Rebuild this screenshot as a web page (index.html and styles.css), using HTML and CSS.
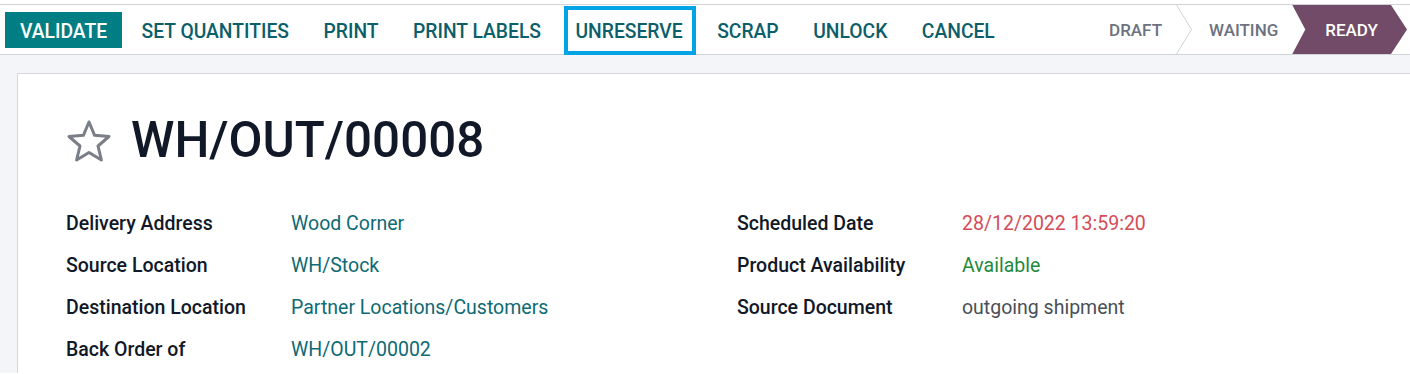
FILE: index.html
```html
<!DOCTYPE html>
<html>
<head>
<meta charset="utf-8">
<link rel="stylesheet" href="styles.css">
</head>
<body>
<div class="top-strip"></div>
<div class="toolbar">
  <div class="actions">
    <button class="btn btn-primary">VALIDATE</button>
    <button class="btn">SET QUANTITIES</button>
    <button class="btn">PRINT</button>
    <button class="btn">PRINT LABELS</button>
    <button class="btn highlighted">UNRESERVE</button>
    <button class="btn">SCRAP</button>
    <button class="btn">UNLOCK</button>
    <button class="btn">CANCEL</button>
  </div>
  <div class="statusbar">
    <div class="stage stage-first">DRAFT</div>
    <svg class="sep" width="16" height="49" viewBox="0 0 16 49"><polyline points="0.5,0 15.5,24.5 0.5,49" fill="none" stroke="#cfd2d6" stroke-width="1"/></svg>
    <div class="stage stage-mid">WAITING</div>
    <div class="stage stage-current">READY</div>
  </div>
</div>
<div class="sheet-bg">
  <div class="sheet">
    <div class="title-row">
      <svg class="star" width="46" height="44" viewBox="0 0 46 44"><polygon points="23,3 28.6,16.3 43,17.5 32,27 35.4,41 23,33.5 10.6,41 14,27 3,17.5 17.4,16.3" fill="none" stroke="#7a7e86" stroke-width="3" stroke-linejoin="round"/></svg>
      <h1 class="title">WH/OUT/00008</h1>
    </div>
    <div class="groups">
      <div class="group">
        <div class="field"><span class="label">Delivery Address</span><span class="value link">Wood Corner</span></div>
        <div class="field"><span class="label">Source Location</span><span class="value link">WH/Stock</span></div>
        <div class="field"><span class="label">Destination Location</span><span class="value link">Partner Locations/Customers</span></div>
        <div class="field"><span class="label">Back Order of</span><span class="value link">WH/OUT/00002</span></div>
      </div>
      <div class="group">
        <div class="field"><span class="label">Scheduled Date</span><span class="value danger">28/12/2022 13:59:20</span></div>
        <div class="field"><span class="label">Product Availability</span><span class="value success">Available</span></div>
        <div class="field"><span class="label">Source Document</span><span class="value muted">outgoing shipment</span></div>
      </div>
    </div>
  </div>
</div>
</body>
</html>
```
FILE: styles.css
```css
* { box-sizing: border-box; }
html, body { margin: 0; padding: 0; }
body {
  font-family: Roboto, "Liberation Sans", sans-serif;
  background: #ffffff;
  width: 1410px;
  height: 374px;
  overflow: hidden;
}
.top-strip {
  height: 5px;
  background: #ffffff;
  border-bottom: 1px solid #cfd2d6;
}
.toolbar {
  height: 50px;
  display: flex;
  justify-content: space-between;
  align-items: stretch;
  border-bottom: 1px solid #cfd2d6;
  background: #ffffff;
}
.actions {
  display: flex;
  align-items: center;
  gap: 4.5px;
  padding-left: 5px;
}
.btn {
  font-family: Roboto, "Liberation Sans", sans-serif;
  font-size: 19.3px;
  font-weight: 500;
  height: 36px;
  padding: 3px 15px 0;
  border: none;
  background: transparent;
  color: #0c5f6a;
  position: relative;
  cursor: pointer;
}
.btn-primary {
  background: #017e84;
  color: #ffffff;
}
.highlighted::after {
  content: "";
  position: absolute;
  left: 4px;
  right: 2px;
  top: -6px;
  bottom: -7px;
  border: 4px solid #00a3e3;
}
.statusbar {
  display: flex;
  align-items: stretch;
  padding-right: 3px;
}
.stage {
  display: flex;
  align-items: center;
  font-size: 17px;
  font-weight: 500;
  color: #6c7280;
}
.stage-first { padding-right: 14px; }
.stage-mid { padding: 0 14px 0 17px; }
.stage-current {
  background: #714b67;
  color: #ffffff;
  padding: 0 29px 0 33px;
  clip-path: polygon(0 0, calc(100% - 16px) 0, 100% 50%, calc(100% - 16px) 100%, 0 100%, 13px 50%);
}
.sep { display: block; }
.sheet-bg {
  background: #f4f5f8;
  padding: 18px 0 0 17px;
  height: 318px;
  overflow: hidden;
}
.sheet {
  background: #ffffff;
  border: 1px solid #d6d8dc;
  border-right: none;
  border-bottom: none;
  height: 300px;
  padding: 42px 0 0 48px;
}
.title-row {
  display: flex;
  align-items: center;
  gap: 19px;
  height: 50px;
}
.star { display: block; margin-top: 0; }
.title {
  margin: 0;
  font-size: 49.3px;
  font-weight: 500;
  color: #111827;
  line-height: 1;
}
.groups {
  display: grid;
  grid-template-columns: 671px 1fr;
  margin-top: 46px;
}
.field {
  display: grid;
  grid-template-columns: 225px 1fr;
  height: 42px;
  align-items: start;
}
.label {
  font-size: 19.5px;
  font-weight: 500;
  color: #111827;
}
.value {
  font-size: 19.5px;
  font-weight: 400;
}
.link { color: #0e6a74; }
.danger { color: #d44c59; }
.success { color: #1f8a3b; }
.muted { color: #4a4f57; }
```
